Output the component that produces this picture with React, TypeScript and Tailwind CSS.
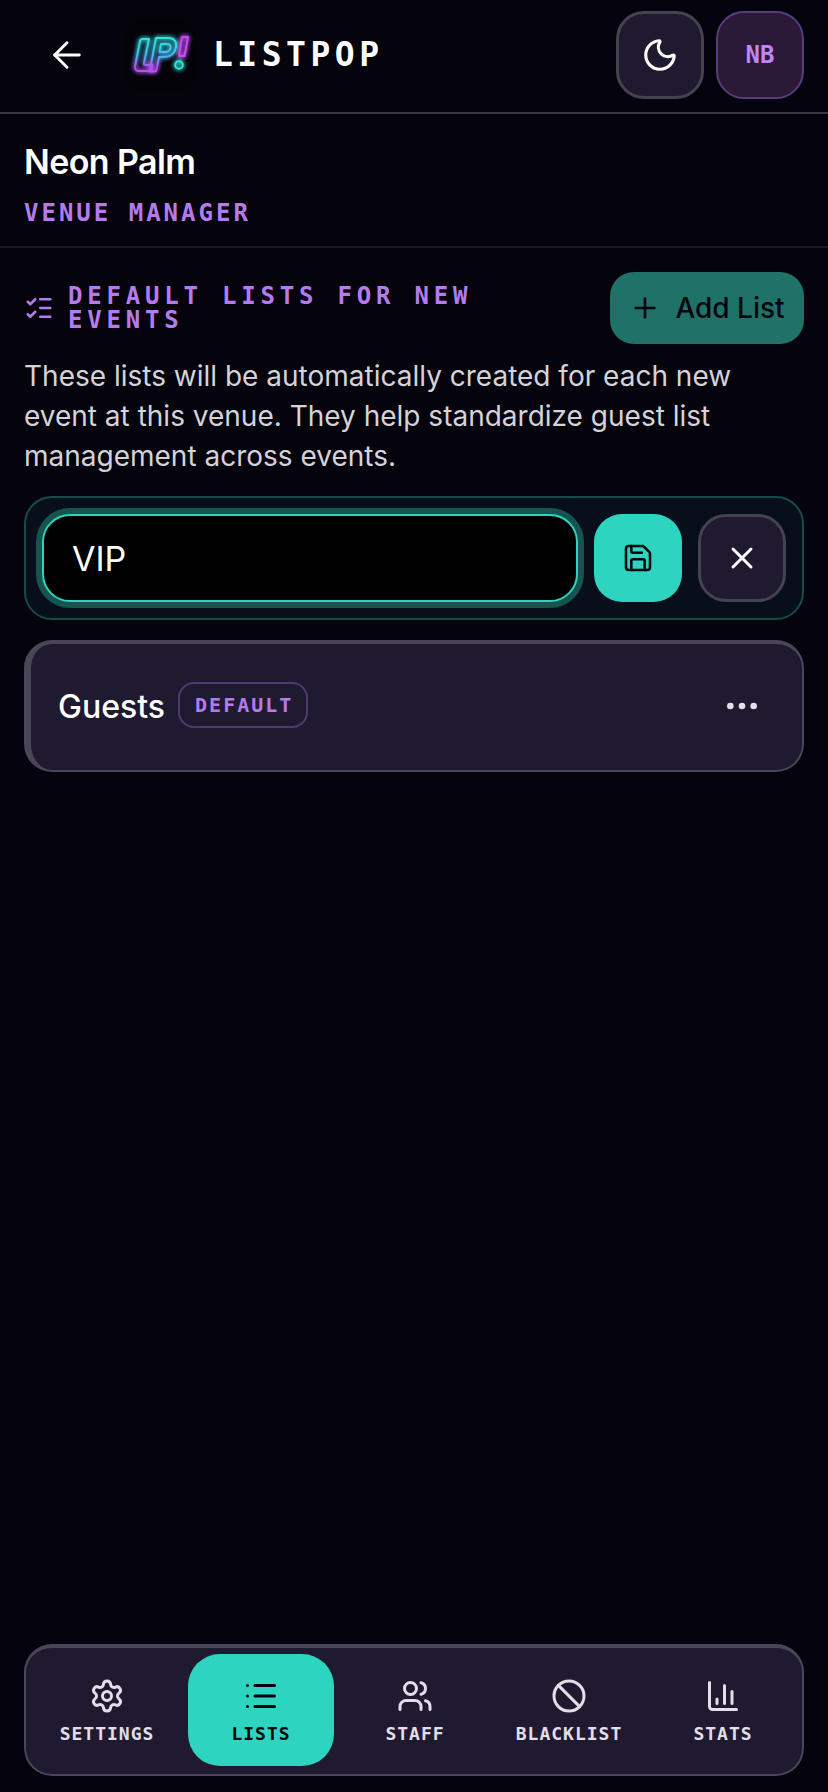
import { ArrowLeft, Ban, ChartColumn, Ellipsis, List, ListChecks, Moon, Plus, Save, Settings, Users, X } from "lucide-react";

const tabs = [
  { label: "SETTINGS", icon: Settings },
  { label: "LISTS", icon: List, active: true },
  { label: "STAFF", icon: Users },
  { label: "BLACKLIST", icon: Ban },
  { label: "STATS", icon: ChartColumn },
];

function Logo() {
  return (
    <div className="flex h-[72px] w-[72px] items-center justify-center rounded-[20px] bg-[#040309]">
      <svg viewBox="0 0 80 80" className="h-[80px] w-[80px] shrink-0" fill="none" strokeWidth="1.900" strokeLinejoin="round">
        <defs>
          <linearGradient id="neon" x1="0" y1="20" x2="0" y2="60" gradientUnits="userSpaceOnUse">
            <stop offset="0" stopColor="#2fe8dc" />
            <stop offset="0.5" stopColor="#3fc0f0" />
            <stop offset="0.8" stopColor="#b44cf5" />
            <stop offset="1" stopColor="#c050f8" />
          </linearGradient>
          <filter id="glow" x="-30%" y="-30%" width="160%" height="160%">
            <feGaussianBlur stdDeviation="2.200" />
          </filter>
        </defs>
        {[true, true, false].map((blur, i) => (
          <g key={i} stroke="url(#neon)" filter={blur ? "url(#glow)" : undefined}>
            {/* L */}
            <path d="M22 24h6l-5 24c-.3 1.400.5 2 1.500 2h7l-1.200 6H18c-3 0-4.500-2-4-4.500L19 26c.3-1.300 1.500-2 3-2z" />
            {/* P */}
            <path d="M35 23h12c6 0 9 3.500 8 9-1 6-5.500 10-12 10h-5l-2.500 13c-.2 1-1 1.500-2 1.500h-5L35 23z" />
            <path d="M40 29h6c3 0 4 1.500 3.500 4-.5 2.500-2.500 4-5.500 4h-5.500L40 29z" />
            {/* ! */}
            <path d="M61 22h6l-3.500 19h-5.500L61 22z" stroke="#c84cf5" />
            <circle cx="58" cy="50" r="3.800" stroke="#2fe8dc" />
          </g>
        ))}
      </svg>
    </div>
  );
}

export default function App() {
  return (
    <div className="flex min-h-[1792px] flex-col bg-[#05040c] font-[Inter,sans-serif] text-white">
      {/* header */}
      <header className="flex h-[114px] items-center border-b-2 border-[#3b3945] pb-[2px] pl-[46px] pr-6">
        <ArrowLeft className="h-[42px] w-[42px] shrink-0" strokeWidth={1.7} />
        <div className="ml-[37px]">
          <Logo />
        </div>
        <span className="ml-[16px] font-['DejaVu_Sans_Mono',monospace] text-[33px] font-bold tracking-[4.500px]">LISTPOP</span>
        <div className="ml-auto flex gap-3">
          <button className="flex h-[88px] w-[88px] items-center justify-center rounded-[28px] border-[3px] border-[#45434f] bg-[#1f1a30]">
            <Moon className="h-[38px] w-[38px]" strokeWidth={2} />
          </button>
          <button className="flex h-[88px] w-[88px] items-center justify-center rounded-[28px] border-2 border-[#583c7c] bg-[#2a1a38] font-['DejaVu_Sans_Mono',monospace] text-[24px] font-bold text-[#c084fc]">
            NB
          </button>
        </div>
      </header>

      {/* venue */}
      <section className="border-b-2 border-[#1b1a24] px-6 pb-[17px] pt-7">
        <h1 className="text-[34px] font-semibold leading-[40px] tracking-[-0.600px]">Neon Palm</h1>
        <p className="mt-[15px] font-['DejaVu_Sans_Mono',monospace] text-[24px] font-bold leading-[32px] tracking-[3px] text-[#b57bee]">VENUE MANAGER</p>
      </section>

      <main className="flex-1 px-6 pt-6">
        <div className="flex items-center justify-between">
          <div className="flex w-[480px] items-center gap-[14px]">
            <ListChecks className="h-[30px] w-[30px] shrink-0 text-[#b57bee]" strokeWidth={2} />
            <h2 className="font-['DejaVu_Sans_Mono',monospace] text-[24px] font-bold leading-[24px] tracking-[4.800px] text-[#b57bee]">DEFAULT LISTS FOR NEW EVENTS</h2>
          </div>
          <button className="flex h-[72px] w-[194px] items-center justify-center gap-[14px] rounded-[24px] bg-[#1f7268] text-[28px] font-medium text-[#05040c]">
            <Plus className="h-[32px] w-[32px]" strokeWidth={2} />
            Add List
          </button>
        </div>

        <p className="mt-3 text-[28px] leading-[40px] text-[#d4d2da]">
          These lists will be automatically created for each new event at this venue. They help standardize guest list management across events.
        </p>

        {/* edit row */}
        <div className="mt-5 flex items-center gap-4 rounded-[28px] border-2 border-[#184a49] bg-[#07101a] p-4">
          <input
            readOnly
            value="VIP"
            className="h-[88px] min-w-0 flex-1 rounded-[28px] border-2 border-[#2dd4bf] bg-black pl-[28px] pr-6 text-[34px] text-white shadow-[0_0_0_6px_#17534f] outline-none"
          />
          <button className="flex h-[88px] w-[88px] items-center justify-center rounded-[28px] bg-[#2dd4bf] text-[#05040c]">
            <Save className="h-[32px] w-[32px]" strokeWidth={1.9} />
          </button>
          <button className="flex h-[88px] w-[88px] items-center justify-center rounded-[28px] border-[3px] border-[#45434f] bg-[#1f1a30]">
            <X className="h-[36px] w-[36px]" strokeWidth={2} />
          </button>
        </div>

        {/* list card */}
        <div className="mt-5 flex h-[132px] items-center rounded-[28px] border-2 border-l-[7px] border-t-4 border-[#4a4558] bg-[#1f1a30] pl-[27px] pr-[40px]">
          <span className="text-[32px] font-medium">Guests</span>
          <span className="mb-[4px] ml-[13px] flex h-[46px] items-center rounded-[16px] border-2 border-[#4f3a72] pl-[15px] pr-[13px] font-['DejaVu_Sans_Mono',monospace] text-[20px] font-bold tracking-[2px] text-[#b57bee]">
            DEFAULT
          </span>
          <Ellipsis className="mb-[2px] ml-auto h-[40px] w-[40px] text-[#e2dfe9]" strokeWidth={2} />
        </div>
      </main>

      {/* bottom nav */}
      <nav className="mx-6 mb-4 mt-auto flex h-[132px] gap-2 rounded-[28px] border-2 border-t-4 border-[#4a4558] bg-[#1f1a30] pb-[8px] pl-[8px] pr-[6px] pt-[6px]">
        {tabs.map((t) => {
          const Icon = t.icon;
          return (
            <div
              key={t.label}
              className={`flex flex-1 flex-col items-center justify-center gap-[8px] rounded-[32px] pt-[3px] ${t.active ? "bg-[#2dd4bf] text-[#05040c]" : "text-[#e2dfe9]"}`}
            >
              <Icon className="h-[36px] w-[36px]" strokeWidth={2} />
              <span className="font-['DejaVu_Sans_Mono',monospace] text-[18px] font-bold leading-[24px] tracking-[1px]">{t.label}</span>
            </div>
          );
        })}
      </nav>
    </div>
  );
}
